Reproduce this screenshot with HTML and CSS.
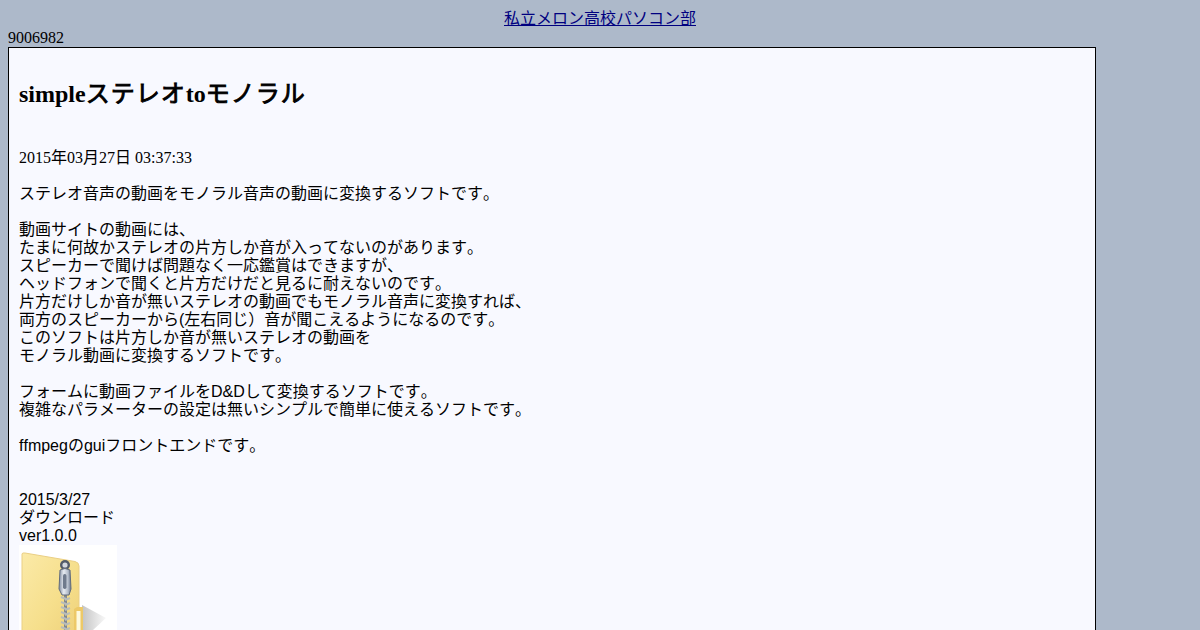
FILE: index.html
```html
<!DOCTYPE html>
<html>
<head>
<meta charset="utf-8">
<title>simpleステレオtoモノラル</title>
<link rel="stylesheet" href="styles.css">
</head>
<body>
<div class="site"><a href="#">私立メロン高校パソコン部</a></div>
<div>9006982</div>
<div class="box">
<h2 class="title">simple<span class="cjk">ステレオ</span>to<span class="cjk">モノラル</span></h2>
<div class="date">2015年03月27日 03:37:33</div>
<div class="desc">ステレオ音声の動画をモノラル音声の動画に変換するソフトです。<br>
<br>
動画サイトの動画には、<br>
たまに何故かステレオの片方しか音が入ってないのがあります。<br>
スピーカーで聞けば問題なく一応鑑賞はできますが、<br>
ヘッドフォンで聞くと片方だけだと見るに耐えないのです。<br>
片方だけしか音が無いステレオの動画でもモノラル音声に変換すれば、<br>
両方のスピーカーから(左右同じ）音が聞こえるようになるのです。<br>
このソフトは片方しか音が無いステレオの動画を<br>
モノラル動画に変換するソフトです。<br>
<br>
フォームに動画ファイルをD&amp;Dして変換するソフトです。<br>
複雑なパラメーターの設定は無いシンプルで簡単に使えるソフトです。<br>
<br>
ffmpegのguiフロントエンドです。<br>
<br>
<br>
2015/3/27<br>
ダウンロード<br>
ver1.0.0</div>
<svg class="zip" width="98" height="98" viewBox="0 0 98 98" aria-hidden="true">
<defs>
<linearGradient id="fold" x1="0" y1="0" x2="1" y2="1"><stop offset="0" stop-color="#fbeaa8"/><stop offset=".55" stop-color="#f6df8c"/><stop offset="1" stop-color="#edcf78"/></linearGradient>
<linearGradient id="metal" x1="0" y1="0" x2="1" y2="0"><stop offset="0" stop-color="#7f8ba0"/><stop offset=".4" stop-color="#e8ecf2"/><stop offset=".75" stop-color="#b3bcca"/><stop offset="1" stop-color="#69748a"/></linearGradient>
<linearGradient id="shadow" x1="0" y1="0" x2="1" y2="0"><stop offset="0" stop-color="#c4c4c4"/><stop offset="1" stop-color="#f9f9f9"/></linearGradient>
</defs>
<rect width="98" height="98" fill="#fff"/>
<path d="M63 60 L87 73 L74 85 L68 98 L63 98Z" fill="url(#shadow)"/>
<path d="M3 9 Q3 7.5 6 8 L56 16.5 Q60 17.5 60 21 L60 98 L3 98Z" fill="url(#fold)" stroke="#eacf85"/>
<path d="M55 64 L58 62 L64 62 L64 98 L55 98Z" fill="#edc968"/>
<rect x="57.5" y="66" width="4" height="30" fill="#fefadf"/>
<rect x="45" y="48" width="3" height="50" fill="#84898f"/>
<path d="M42 52 l5 2 M51 53 l-5 2 M42 57 l5 2 M51 58 l-5 2 M42 62 l5 2 M51 63 l-5 2 M42 67 l5 2 M51 68 l-5 2 M42 72 l5 2 M51 73 l-5 2 M42 77 l5 2 M51 78 l-5 2 M42 82 l5 2 M51 83 l-5 2" stroke="#b9bdb9" stroke-width="2"/>
<circle cx="46" cy="20" r="5" fill="#525b69"/>
<circle cx="46" cy="20" r="2.6" fill="#d3d8df"/>
<path d="M41 25 Q46 22 51 25 L52 44 L50 50 L43 50 L40 44Z" fill="url(#metal)" stroke="#626c7c"/>
<rect x="44" y="29" width="3.5" height="15" rx="1.7" fill="#6f7a8c"/>
</svg>
</div>
</body>
</html>
```
FILE: styles.css
```css
body {
  background: #adb9ca;
  color: #000;
  font: 16px/18px "Liberation Serif", "Noto Sans CJK SC", serif;
  font-kerning: none;
}
.site {
  height: 19px;
  padding-top: 2px;
  text-align: center;
}
.site a {
  color: #000080;
}
.box {
  width: 1066px;
  padding: 10px;
  border: 1px solid #000;
  background: #f8f9ff;
}
.title {
  margin: 20px 0 39px;
  font-size: 24px;
  line-height: 32px;
}
.cjk {
  font-weight: 400;
  letter-spacing: 1px;
  -webkit-text-stroke: 0.9px #000;
}
.date {
  margin-bottom: 18px;
}
.desc {
  font-family: "Liberation Sans", "Noto Sans CJK SC", sans-serif;
}
.zip {
  display: block;
}
```
